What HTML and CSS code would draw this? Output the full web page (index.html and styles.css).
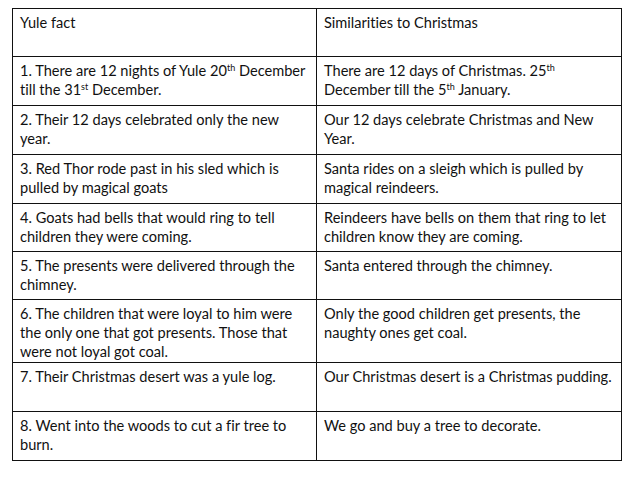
FILE: index.html
```html
<!DOCTYPE html>
<html>
<head>
<meta charset="utf-8">
<link rel="stylesheet" href="styles.css">
</head>
<body>
<table class="facts">
  <colgroup><col class="c1"><col class="c2"></colgroup>
  <tr class="r49"><td>Yule fact</td><td>Similarities to Christmas</td></tr>
  <tr class="r50"><td>1. There are 12 nights of Yule 20<sup>th</sup> December<br>till the 31<sup>st</sup> December.</td><td>There are 12 days of Christmas. 25<sup>th</sup><br>December till the 5<sup>th</sup> January.</td></tr>
  <tr class="r50"><td>2. Their 12 days celebrated only the new<br>year.</td><td>Our 12 days celebrate Christmas and New<br>Year.</td></tr>
  <tr class="r50"><td>3. Red Thor rode past in his sled which is<br>pulled by magical goats</td><td>Santa rides on a sleigh which is pulled by<br>magical reindeers.</td></tr>
  <tr class="r49"><td>4. Goats had bells that would ring to tell<br>children they were coming.</td><td>Reindeers have bells on them that ring to let<br>children know they are coming.</td></tr>
  <tr class="r49"><td>5. The presents were delivered through the<br>chimney.</td><td>Santa entered through the chimney.</td></tr>
  <tr class="r64"><td>6. The children that were loyal to him were<br>the only one that got presents. Those that<br>were not loyal got coal.</td><td>Only the good children get presents, the<br>naughty ones get coal.</td></tr>
  <tr class="r50"><td>7. Their Christmas desert was a yule log.</td><td>Our Christmas desert is a Christmas pudding.</td></tr>
  <tr class="r50"><td>8. Went into the woods to cut a fir tree to<br>burn.</td><td>We go and buy a tree to decorate.</td></tr>
</table>
</body>
</html>
```
FILE: styles.css
```css
html, body {
  margin: 0;
  background: #ffffff;
}
body {
  font-family: Lato, "Open Sans", sans-serif;
  font-size: 14.6px;
  color: #111111;
  font-variant-ligatures: none;
}
.facts {
  margin: 8px 0 0 12px;
  border-collapse: collapse;
  table-layout: fixed;
  width: 610px;
}
.c1 { width: 304px; }
.c2 { width: 305px; }
.facts td {
  border: 1px solid #111111;
  vertical-align: top;
  padding: 4px 4px 0 7px;
  line-height: 19px;
  white-space: nowrap;
  overflow: hidden;
}
.facts sup {
  font-size: 0.62em;
  line-height: 0;
  vertical-align: 0.5em;
}
.r49 { height: 48px; }
.r50 { height: 49px; }
.r64 { height: 63px; }
```
